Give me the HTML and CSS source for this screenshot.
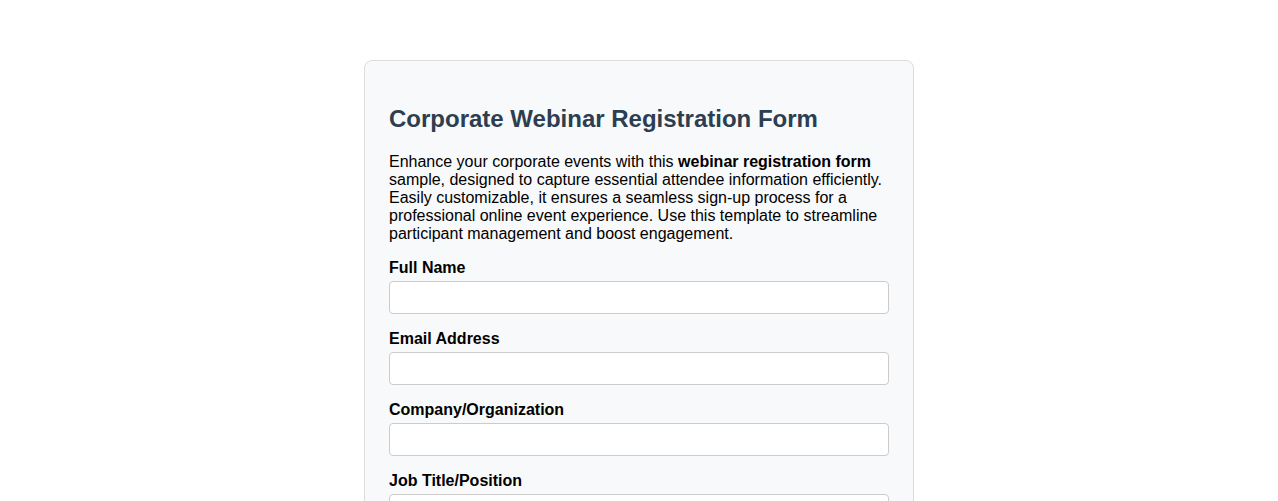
FILE: index.html
```html
<!DOCTYPE html>
<html lang="en">
<head>
<meta charset="utf-8">
<title>Corporate Webinar Registration Form</title>
<link rel="stylesheet" href="styles.css">
</head>
<body>
<div class="form-card">
  <h2 class="form-title">Corporate Webinar Registration Form</h2>
  <p class="form-intro">Enhance your corporate events with this <strong>webinar registration form</strong> sample, designed to capture essential attendee information efficiently. Easily customizable, it ensures a seamless sign-up process for a professional online event experience. Use this template to streamline participant management and boost engagement.</p>
  <form class="form-body">
    <div class="form-group">
      <label class="form-label" for="fullname">Full Name</label>
      <input class="form-input" type="text" id="fullname">
    </div>
    <div class="form-group">
      <label class="form-label" for="email">Email Address</label>
      <input class="form-input" type="email" id="email">
    </div>
    <div class="form-group">
      <label class="form-label" for="company">Company/Organization</label>
      <input class="form-input" type="text" id="company">
    </div>
    <div class="form-group">
      <label class="form-label" for="jobtitle">Job Title/Position</label>
      <input class="form-input" type="text" id="jobtitle">
    </div>
  </form>
</div>
</body>
</html>
```
FILE: styles.css
```css
html, body {
  margin: 0;
  padding: 0;
  background: #ffffff;
}

body {
  font-family: "Liberation Sans", Arial, sans-serif;
  font-size: 16px;
  color: #000000;
  padding-top: 60px;
}

.form-card {
  width: 500px;
  margin: 0 auto;
  padding: 24px;
  background: #f8f9fa;
  border: 1px solid #dddddd;
  border-radius: 8px;
}

.form-title {
  font-size: 24px;
  font-weight: bold;
  color: #2c3e50;
  margin: 20px 0;
}

.form-intro {
  margin: 16px 0;
  line-height: normal;
}

.form-body {
  margin: 0;
}

.form-group {
  margin-bottom: 16px;
}

.form-label {
  display: block;
  font-weight: bold;
  margin-bottom: 4px;
}

.form-input {
  display: block;
  box-sizing: border-box;
  width: 100%;
  padding: 8px;
  font-family: "Liberation Sans", Arial, sans-serif;
  font-size: 13.333px;
  border: 1px solid #cccccc;
  border-radius: 4px;
  background: #ffffff;
}
```
